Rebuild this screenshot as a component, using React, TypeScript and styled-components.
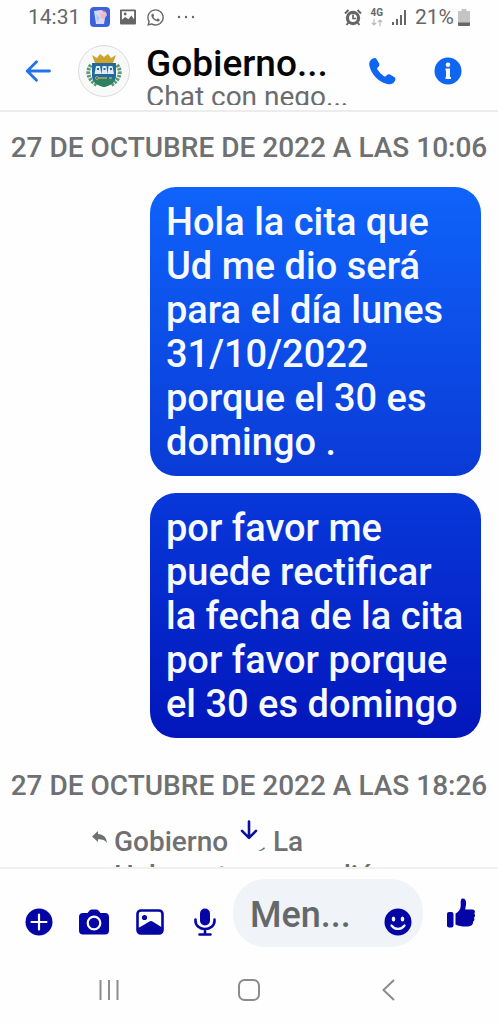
import React from "react";
import styled, { createGlobalStyle } from "styled-components";
import { FaWhatsapp } from "react-icons/fa";

const GlobalStyle = createGlobalStyle`
  * { box-sizing: border-box; }
  body { margin: 0; background: #fefefe; font-family: Roboto, "Liberation Sans", sans-serif; }
  button { border: 0; padding: 0; margin: 0; background: none; font: inherit; cursor: pointer; }
  svg { display: block; flex: none; }
`;

const Screen = styled.div`
  display: flex;
  flex-direction: column;
  height: 100vh;
  overflow: hidden;
`;

const StatusBar = styled.div`
  display: flex;
  justify-content: space-between;
  align-items: center;
  height: 34px;
  padding: 0 28px;
  color: #666;
  font-size: 21px;
  line-height: 24px;
  flex: none;
`;

const StatusGroup = styled.div<{ $gap: number }>`
  display: flex;
  align-items: center;
  gap: ${(p) => p.$gap}px;
`;

const Network = styled.div`
  display: flex;
  flex-direction: column;
  align-items: center;
  gap: 1px;
  font-size: 10px;
  line-height: 10px;
  font-weight: 700;
`;

const Header = styled.header`
  display: flex;
  align-items: center;
  height: 78px;
  padding: 0 36px 2px 25px;
  border-bottom: 2px solid #ececec;
  flex: none;
`;

const IconButton = styled.button<{ $color: string }>`
  display: flex;
  align-items: center;
  justify-content: center;
  color: ${(p) => p.$color};
`;

const Avatar = styled.div`
  display: flex;
  justify-content: center;
  align-items: center;
  width: 52px;
  height: 52px;
  margin: 0 16px 0 27px;
  border: 1px solid #dcdce0;
  border-radius: 50%;
  background: #f8f9f9;
  flex: none;
`;

const Heading = styled.div`
  flex: 1;
  align-self: flex-end;
  min-width: 0;
  padding-bottom: 3px;
  white-space: nowrap;
`;

const Title = styled.h1`
  margin: 0;
  height: 33px;
  overflow: hidden;
  color: #050505;
  font-size: 37px;
  line-height: 40px;
  font-weight: 500;
`;

const Subtitle = styled.p`
  margin: 4px 0 0;
  height: 24px;
  overflow: hidden;
  color: #6a6c6e;
  font-size: 28px;
  line-height: 32px;
`;

const HeaderActions = styled.div`
  display: flex;
  gap: 38px;
`;

const Chat = styled.main`
  position: relative;
  flex: 1;
  min-height: 0;
  overflow: hidden;
  padding-top: 18px;
`;

const DateLine = styled.p`
  margin: 0;
  color: #6e7072;
  font-size: 28px;
  line-height: 36px;
  font-weight: 500;
  text-align: center;
  white-space: nowrap;
`;

const Messages = styled.div`
  display: flex;
  flex-direction: column;
  gap: 17px;
  padding: 21px 17px 30px 150px;
`;

const Bubble = styled.p<{ $from: string; $to: string }>`
  margin: 0;
  padding: 13px 16px 12px;
  border-radius: 26px;
  background: linear-gradient(${(p) => p.$from}, ${(p) => p.$to});
  color: #f6faff;
  font-size: 38px;
  line-height: 44px;
  font-weight: 500;
`;

const Reply = styled.div`
  display: flex;
  align-items: flex-start;
  gap: 7px;
  padding: 21px 80px 0 92px;
  color: #6e7072;
  font-size: 28px;
  line-height: 34px;
  font-weight: 500;

  svg { margin-top: 6px; }
`;

const ReplyText = styled.p`
  margin: 0;
  white-space: pre-line;
`;

const ScrollDown = styled.button`
  position: absolute;
  bottom: 14px;
  left: 50%;
  display: flex;
  align-items: center;
  justify-content: center;
  width: 46px;
  height: 46px;
  border-radius: 50%;
  color: #0a0f9c;
  transform: translateX(-50%);

  && { background: #fefefe; }
`;

const Composer = styled.form`
  display: grid;
  grid-template-columns: 222px minmax(0, 1fr) 75px;
  padding: 10px 0 11px 11px;
  border-top: 2px solid #f0f0f0;
  flex: none;
`;

const Tools = styled.div`
  display: grid;
  grid-template-columns: repeat(4, 1fr);
  padding-top: 17px;
`;

const Field = styled.div`
  display: flex;
  align-items: center;
  height: 68px;
  padding: 0 11px 0 17px;
  border-radius: 32px;
  background: #f0f3f7;
`;

const MessageInput = styled.input`
  flex: 1;
  min-width: 0;
  height: 60px;
  padding: 4px 0 0;
  border: 0;
  outline: 0;
  background: none;
  color: #050505;
  font-family: inherit;
  font-size: 36px;
  line-height: 44px;
  font-weight: 500;

  &::placeholder { color: #65686b; opacity: 1; }
`;

const EmojiSlot = styled.div`
  padding-top: 17px;
`;

const NavBar = styled.nav`
  display: flex;
  justify-content: space-between;
  align-items: center;
  height: 66px;
  padding: 0 98px 2px;
  flex: none;
`;

const BLUE = "#0f66f0";
const NAVY = "#0505a5";

const AppBadge = () => (
  <svg width="20" height="20" viewBox="0 0 20 20">
    <rect width="20" height="20" rx="4" fill="#3b62dc" />
    <path d="M4 4l2 13h8l2-12-5-2z" fill="#d4d8f5" />
    <path d="M10 6l5 1 1-2 1 3-3 4-3-1z" fill="#f0b9c2" />
    <path d="M12 3l4 1-2 2z" fill="#e87868" />
    <path d="M6 7l4 4-3 4z" fill="#b9c2f0" />
  </svg>
);

const PictureBadge = () => (
  <svg width="16" height="16" viewBox="0 0 17 16">
    <path fillRule="evenodd" fill="currentColor" d="M1 0h15a1 1 0 011 1v14a1 1 0 01-1 1H1a1 1 0 01-1-1V1a1 1 0 011-1zm1 2v9l3.500-3 3.500 2.500 3-4 3 4V2z" />
    <circle cx="5.500" cy="4.800" r="1.500" fill="currentColor" />
  </svg>
);

const More = () => (
  <svg width="20" height="4" viewBox="0 0 20 4" fill="currentColor">
    <circle cx="4" cy="2" r="1.200" /><circle cx="11" cy="2" r="1.200" /><circle cx="18" cy="2" r="1.200" />
  </svg>
);

const Alarm = () => (
  <svg width="18" height="17" viewBox="0 0 18 17" fill="none">
    <circle cx="9" cy="9" r="5.600" stroke="currentColor" strokeWidth="3.200" />
    <path d="M9 5.500V9.500h3.200" stroke="currentColor" strokeWidth="1.700" />
    <path d="M1 4.500L4.500 1M17 4.500L13.500 1M4.500 13.500l-2 2.500M13.500 13.500l2 2.500" stroke="currentColor" strokeWidth="2" />
  </svg>
);

const DataArrows = () => (
  <svg width="12" height="7" viewBox="0 0 12 7" fill="none" stroke="#bbb" strokeWidth="1.200">
    <path d="M3 0v6M.8 3.800L3 6l2.200-2.200M9 7V1M6.800 3.200L9 1l2.200 2.200" />
  </svg>
);

const Signal = () => (
  <svg width="16" height="16" viewBox="0 0 16 16" fill="currentColor">
    <path d="M1 13h2v3H1zM5 10h2v6H5zM9 6h2v10H9zM13 1h2v15h-2z" />
  </svg>
);

const Battery = () => (
  <svg width="12" height="17" viewBox="0 0 12 17">
    <path d="M3.500 0h5v2H11a1 1 0 011 1v11H0V3a1 1 0 011-1h2.500z" fill="#c4c4c4" />
    <path d="M0 13.500h12V16a1 1 0 01-1 1H1a1 1 0 01-1-1z" fill="#666" />
  </svg>
);

const Crest = () => (
  <svg width="36" height="36" viewBox="0 0 36 36">
    <path d="M5 12C0 18 2 27 11 32M31 12c5 6 3 15-6 20" fill="none" stroke="#5f9a77" strokeWidth="4" strokeDasharray="2.500 1" />
    <path d="M6 10h24v13c0 6-6 9-12 11C12 32 6 29 6 23z" fill="#23699c" />
    <path d="M7 26h22c-1 5-6 7-11 8-5-1-10-3-11-8z" fill="#2e8062" />
    <path d="M8.500 21l1.500-8h4l1.500 8zM15.500 21l1-8h4l1 8zM21.500 21l1-8h4l1.500 8z" fill="#dceaf5" />
    <path d="M11 15h2v2h-2zM17.500 15h2v2h-2zM24 15h2v2h-2z" fill="#23699c" />
    <path d="M12 25h9M23 25h3" stroke="#b6ad5d" strokeWidth="1.500" />
    <circle cx="11" cy="25" r="1.500" fill="none" stroke="#b6ad5d" />
    <path d="M6 2l5 3 3-4 4 3 4-3 3 4 5-3-3 8H9z" fill="#d0a32e" />
  </svg>
);

const BackArrow = () => (
  <svg width="26" height="22" viewBox="0 0 26 22" fill="none" stroke="currentColor" strokeWidth="2.800" strokeLinecap="round" strokeLinejoin="round">
    <path d="M24.500 11H2.500M11.500 1.800L2.200 11l9.300 9.200" />
  </svg>
);

const Phone = () => (
  <svg width="27" height="27" viewBox="0 0 27 27" fill="currentColor">
    <path d="M3.300.8C5.500-.3 7-.1 8 1.700l2 3.600c.8 1.500.5 2.600-.8 3.700-1.300 1-1.300 1.600-.4 3 1.400 2.200 3.500 4.300 5.800 5.900 1.400 1 2 .9 3-.3 1.100-1.300 2.200-1.600 3.700-.8l3.500 2c1.800 1 2.100 2.500 1 4.500-1.500 2.700-4.300 3.600-7.600 2.700C9.500 23.700 2.600 16.700.5 8.200-.3 5 .8 2.100 3.300.8z" />
  </svg>
);

const Info = () => (
  <svg width="28" height="28" viewBox="0 0 28 28">
    <circle cx="14" cy="14" r="13.500" fill="currentColor" />
    <circle cx="14" cy="7.800" r="2.300" fill="#fefefe" />
    <path d="M11.500 11.500H16v8.500h1v2h-5.500v-2h.5v-6.500h-.5z" fill="#fefefe" />
  </svg>
);

const ReplyArrow = () => (
  <svg width="15" height="13" viewBox="0 0 15 13" fill="currentColor">
    <path d="M6 0v3c5 .3 8.500 3 9 9-2-3-4.600-3.800-9-3.800V11L0 5.500z" />
  </svg>
);

const DownArrow = () => (
  <svg width="18" height="20" viewBox="0 0 18 20" fill="none" stroke="currentColor" strokeWidth="2.600" strokeLinecap="round" strokeLinejoin="round">
    <path d="M9 1.500v16M2 10.800l7 7 7-7" />
  </svg>
);

const Plus = () => (
  <svg width="28" height="28" viewBox="0 0 28 28">
    <circle cx="14" cy="14" r="13.500" fill="currentColor" />
    <path d="M14 6.500v15M6.500 14h15" stroke="#fefefe" strokeWidth="2.200" strokeLinecap="round" />
  </svg>
);

const Camera = () => (
  <svg width="30" height="26" viewBox="0 0 30 26">
    <path d="M10.500 1.500Q11.500.5 13 .5h4q1.500 0 2.500 1L21.500 4H26q4 0 4 4v13.500q0 4-4 4H4q-4 0-4-4V8q0-4 4-4h4.500z" fill="currentColor" />
    <circle cx="15" cy="14" r="6.300" fill="none" stroke="#fefefe" strokeWidth="2.200" />
  </svg>
);

const Picture = () => (
  <svg width="28" height="26" viewBox="0 0 28 26">
    <rect x="1.500" y="1.500" width="25" height="23" rx="3.500" fill="none" stroke="currentColor" strokeWidth="2.600" />
    <circle cx="8.500" cy="8.500" r="2.600" fill="currentColor" />
    <path d="M2 19l3-1.500 8.500-5q1.500-.8 3 0l8 5 2 1.500v3q0 3-3 3H5q-3 0-3-3z" fill="currentColor" />
  </svg>
);

const Mic = () => (
  <svg width="22" height="28" viewBox="0 0 22 28">
    <rect x="6" y=".5" width="10" height="17" rx="5" fill="currentColor" />
    <path d="M1.500 11.500v1.500a9.500 8 0 0019 0v-1.500M11 21v5M5.500 26.500h11" fill="none" stroke="currentColor" strokeWidth="2.600" strokeLinecap="round" />
  </svg>
);

const Smile = () => (
  <svg width="28" height="28" viewBox="0 0 28 28">
    <circle cx="14" cy="14" r="13.500" fill="currentColor" />
    <ellipse cx="9.500" cy="11" rx="1.800" ry="2.500" fill="#f0f3f7" />
    <ellipse cx="18.500" cy="11" rx="1.800" ry="2.500" fill="#f0f3f7" />
    <path d="M7.500 17.500c3.500 4.600 9.500 4.600 13 0" fill="none" stroke="#f0f3f7" strokeWidth="2.200" strokeLinecap="round" />
  </svg>
);

const Thumb = () => (
  <svg width="28" height="30" viewBox="0 0 28 30" fill="currentColor">
    <rect x="0" y="14" width="6.500" height="15.500" rx="2" />
    <path d="M8.500 15.500c3-1.500 5-4 5.200-7.500.1-3.500-.6-7.500 2-7.500 2.800 0 3.800 2.800 3.300 6l-.8 5h7.300c2.500 0 3.200 2.600 1.700 4 1.300 1.300 1 3.400-.3 4.200.9 1.400.4 3.200-.9 4 .3 3-1.500 4.500-5 4.800-4.500.4-9-.3-12.500-2z" />
  </svg>
);

const Recents = () => (
  <svg width="22" height="22" viewBox="0 0 22 22" stroke="currentColor" strokeWidth="2">
    <path d="M2.500 1v20M11 1v20M19.500 1v20" />
  </svg>
);

const Home = () => (
  <svg width="22" height="22" viewBox="0 0 22 22" fill="none" stroke="currentColor" strokeWidth="2">
    <rect x="1" y="1" width="20" height="20" rx="5.500" />
  </svg>
);

const NavBack = () => (
  <svg width="22" height="22" viewBox="0 0 22 22" fill="none" stroke="currentColor" strokeWidth="2">
    <path d="M16 1L5.500 11 16 21" />
  </svg>
);

export default function App() {
  return (
    <>
      <GlobalStyle />
      <Screen>
        <StatusBar>
          <StatusGroup $gap={10}>
            <span>14:31</span>
            <AppBadge />
            <PictureBadge />
            <FaWhatsapp size={19} />
            <More />
          </StatusGroup>
          <StatusGroup $gap={8}>
            <Alarm />
            <Network>
              4G
              <DataArrows />
            </Network>
            <Signal />
            <StatusGroup $gap={4}>
              <span>21%</span>
              <Battery />
            </StatusGroup>
          </StatusGroup>
        </StatusBar>

        <Header>
          <IconButton $color="#2272ea" aria-label="Atrás"><BackArrow /></IconButton>
          <Avatar><Crest /></Avatar>
          <Heading>
            <Title>Gobierno...</Title>
            <Subtitle>Chat con nego...</Subtitle>
          </Heading>
          <HeaderActions>
            <IconButton $color={BLUE} aria-label="Llamar"><Phone /></IconButton>
            <IconButton $color={BLUE} aria-label="Información"><Info /></IconButton>
          </HeaderActions>
        </Header>

        <Chat>
          <DateLine>27 DE OCTUBRE DE 2022 A LAS 10:06</DateLine>
          <Messages>
            <Bubble $from="#0f63fb" $to="#0a3ad6">
              Hola la cita que Ud me dio será para el día lunes 31/10/2022 porque el 30 es domingo .
            </Bubble>
            <Bubble $from="#0838da" $to="#0216bb">
              por favor me puede rectificar la fecha de la cita por favor porque el 30 es domingo
            </Bubble>
          </Messages>
          <DateLine>27 DE OCTUBRE DE 2022 A LAS 18:26</DateLine>
          <Reply>
            <ReplyArrow />
            <ReplyText>{"Gobierno de La\nHabana te respondió"}</ReplyText>
          </Reply>
          <ScrollDown aria-label="Ir al final"><DownArrow /></ScrollDown>
        </Chat>

        <Composer onSubmit={(e) => e.preventDefault()}>
          <Tools>
            <IconButton type="button" $color={NAVY} aria-label="Más opciones"><Plus /></IconButton>
            <IconButton type="button" $color={NAVY} aria-label="Cámara"><Camera /></IconButton>
            <IconButton type="button" $color={NAVY} aria-label="Galería"><Picture /></IconButton>
            <IconButton type="button" $color={NAVY} aria-label="Micrófono"><Mic /></IconButton>
          </Tools>
          <Field>
            <MessageInput aria-label="Mensaje" placeholder="Men..." />
            <EmojiSlot>
              <IconButton type="button" $color={NAVY} aria-label="Emojis"><Smile /></IconButton>
            </EmojiSlot>
          </Field>
          <IconButton type="button" $color={NAVY} aria-label="Me gusta"><Thumb /></IconButton>
        </Composer>

        <NavBar>
          <IconButton $color="#8c8c8c" aria-label="Recientes"><Recents /></IconButton>
          <IconButton $color="#8c8c8c" aria-label="Inicio"><Home /></IconButton>
          <IconButton $color="#8c8c8c" aria-label="Volver"><NavBack /></IconButton>
        </NavBar>
      </Screen>
    </>
  );
}
